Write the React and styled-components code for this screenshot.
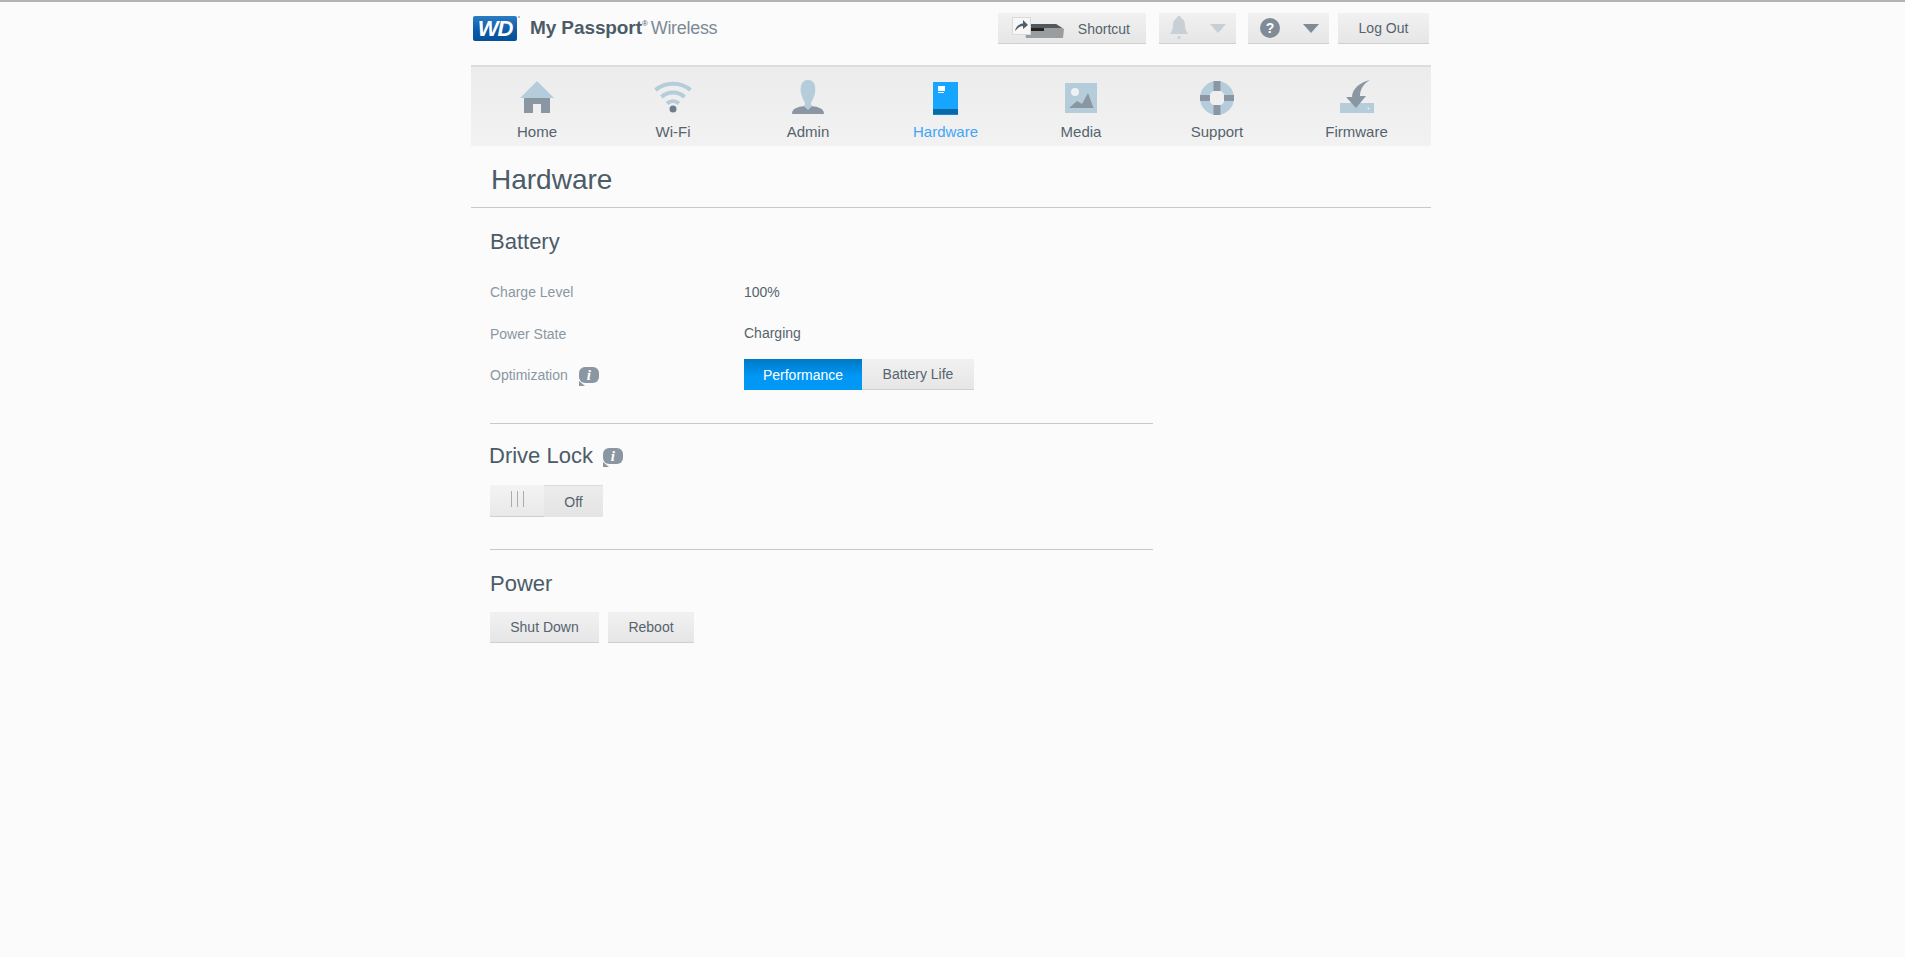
import React from "react";
import styled, { createGlobalStyle } from "styled-components";

const Global = createGlobalStyle`
  html, body { margin: 0; padding: 0; background: #fbfbfb; }
  body { font-family: "Liberation Sans", Arial, sans-serif; color: #4b5b68; border-top: 2px solid #b2b2b2; min-height: 955px; }
`;

const Page = styled.div`
  width: 960px;
  margin-left: 471px;
`;

const Header = styled.header`
  height: 63px;
  display: flex;
  justify-content: space-between;
  align-items: flex-start;
`;

const Brand = styled.div`
  display: flex;
  align-items: center;
  margin: 13px 0 0 2px;
`;

const WdBadge = styled.div`
  width: 44px;
  height: 25px;
  border-radius: 2px;
  background: linear-gradient(180deg, #2a7cc4 0%, #0b5aa6 60%, #054f96 100%);
  color: #fff;
  font: italic 700 22px/25px "Liberation Sans", sans-serif;
  letter-spacing: -1px;
  text-align: center;
  position: relative;
  &::after {
    content: "";
    position: absolute;
    right: -3px;
    top: 0;
    width: 2px;
    height: 2px;
    background: #8fb0cc;
    border-radius: 50%;
  }
`;

const BrandName = styled.div`
  margin: 0 0 0 13px;
  font-size: 19px;
  line-height: 25px;
  white-space: nowrap;
  color: #4b5b68;
  font-weight: 700;
  letter-spacing: -0.1px;
  sup { font-size: 8px; line-height: 0; vertical-align: 8px; font-weight: 400; }
`;

const BrandLight = styled.span`
  font-weight: 400;
  color: #7d8a95;
  margin-left: 3px;
  font-size: 18px;
  letter-spacing: -0.3px;
`;

const Actions = styled.div`
  display: flex;
  margin: 11px 2px 0 0;
`;

const TopButton = styled.div`
  box-sizing: border-box;
  width: ${(p) => p.$w}px;
  margin-left: ${(p) => p.$ml || 0}px;
  height: 31px;
  background: linear-gradient(180deg, #f1f1f1, #e6e6e6);
  border-bottom: 1px solid #cfcfcf;
  font-size: 14px;
  color: #55636e;
  display: flex;
  align-items: center;
  justify-content: ${(p) => p.$justify || "center"};
  padding: ${(p) => p.$pad || "0"};
`;

const ShortcutLabel = styled.span`
  margin-top: 2px;
`;

const Nav = styled.nav`
  box-sizing: border-box;
  height: 81px;
  border-top: 2px solid #dcdcdc;
  background: linear-gradient(180deg, #ececec, #f2f2f2);
  display: grid;
  grid-template-columns: 132px 140px 130px 145px 126px 146px 133px;
`;

const NavItem = styled.div`
  display: flex;
  flex-direction: column;
  align-items: center;
  font-size: 15px;
  line-height: 16px;
  color: ${(p) => (p.$active ? "#42a5f5" : "#55636e")};
  svg { display: block; height: 36px; margin: 13px 0 8px; }
`;

const TitleBar = styled.div`
  height: 62px;
  box-sizing: border-box;
  border-bottom: 1px solid #c9c9c9;
  padding: 17px 0 0 20px;
  font-size: 28px;
  line-height: 34px;
  color: #4b5b68;
`;

const Section = styled.section`
  width: 663px;
  margin-left: 19px;
  padding-bottom: ${(p) => p.$pb || 0}px;
  border-bottom: ${(p) => (p.$rule ? "1px solid #c9c9c9" : "none")};
`;

const Heading = styled.h2`
  margin: 0;
  padding-top: ${(p) => p.$pt}px;
  padding-bottom: ${(p) => p.$pb}px;
  margin-left: ${(p) => p.$ml || 0}px;
  font-size: 22px;
  line-height: 24px;
  font-weight: 400;
  color: #4b5b68;
  display: flex;
  align-items: center;
`;

const Row = styled.div`
  display: flex;
  align-items: center;
  height: ${(p) => p.$h}px;
  font-size: 14px;
`;

const Label = styled.div`
  width: 254px;
  color: #8a97a2;
  display: flex;
  align-items: center;
  margin-top: 1px;
`;

const Value = styled.div`
  color: #55636e;
`;

const Segment = styled.div`
  display: flex;
  height: 31px;
`;

const SegButton = styled.div`
  box-sizing: border-box;
  width: ${(p) => p.$w}px;
  height: 31px;
  display: flex;
  align-items: center;
  justify-content: center;
  font-size: 14px;
  color: ${(p) => (p.$on ? "#fff" : "#55636e")};
  background: ${(p) =>
    p.$on
      ? "linear-gradient(180deg, #0078c4, #0097f5 55%)"
      : "linear-gradient(180deg, #f1f1f1, #e6e6e6)"};
  border-bottom: ${(p) => (p.$on ? "none" : "1px solid #cfcfcf")};
`;

const InfoBubble = styled.span`
  position: relative;
  display: inline-flex;
  align-items: center;
  justify-content: center;
  width: 20px;
  height: 16px;
  margin-left: ${(p) => p.$ml}px;
  margin-top: -1px;
  border-radius: 6px;
  background: #8a97a2;
  color: #fff;
  font: italic 700 15px/16px "Liberation Serif", serif;
  &::after {
    content: "";
    position: absolute;
    left: 0;
    bottom: -3px;
    border-style: solid;
    border-width: 5px 0 0 6px;
    border-color: transparent transparent transparent #8a97a2;
  }
`;

const DriveToggle = styled.div`
  display: flex;
  height: 32px;
  padding-bottom: 32px;
`;

const Handle = styled.div`
  box-sizing: border-box;
  width: 54px;
  height: 32px;
  background: linear-gradient(180deg, #f3f3f3, #e9e9e9);
  border-bottom: 1px solid #cfcfcf;
  display: flex;
  justify-content: center;
  gap: 5px;
  padding-top: 6px;
`;

const Grip = styled.i`
  display: block;
  width: 1px;
  height: 16px;
  background: #a6adb3;
`;

const OffPart = styled.div`
  box-sizing: border-box;
  width: 59px;
  height: 32px;
  border-top: 1px solid #dcdcdc;
  background: linear-gradient(180deg, #ececec, #e4e4e4);
  display: flex;
  align-items: center;
  justify-content: center;
  font-size: 14px;
  color: #55636e;
`;

const ButtonRow = styled.div`
  display: flex;
  gap: 9px;
`;

const LIGHT = "#b5ccdb";
const DARK = "#8a97a2";

const HomeIcon = () => (
  <svg width="36" height="36" viewBox="0 0 36 36">
    <path d="M18 1 L35 18 H1 Z" fill={LIGHT} />
    <path d="M5 18 H31 V33 H22 V24 H14 V33 H5 Z" fill={DARK} />
  </svg>
);
const WifiIcon = () => (
  <svg width="40" height="36" viewBox="0 0 40 36" fill="none">
    <path d="M2.5 10 C12 1.5 28 1.5 37.5 10" stroke={LIGHT} strokeWidth="4" />
    <path d="M8.5 17 C15 11 25 11 31.500 17" stroke={LIGHT} strokeWidth="4" />
    <path d="M14 23.500 C17.500 20.500 22.500 20.500 26 23.500" stroke={LIGHT} strokeWidth="4" />
    <circle cx="20" cy="29" r="3.500" fill="#6f7d89" />
  </svg>
);
const AdminIcon = () => (
  <svg width="36" height="36" viewBox="0 0 36 36">
    <path d="M2 34 C2 28 8 27 14 26 L18 29 L22 26 C28 27 34 28 34 34 Z" fill={DARK} />
    <path d="M18 0 C25 0 26 7 25 13 C24 19 21 21 21 24 L22 26 L18 30 L14 26 L15 24 C15 21 12 19 11 13 C10 7 11 0 18 0 Z" fill={LIGHT} />
  </svg>
);
const HardwareIcon = () => (
  <svg width="26" height="36" viewBox="0 0 26 36">
    <rect x="0" y="2" width="25" height="33" fill="#16a6ff" />
    <rect x="0" y="29" width="25" height="5.500" fill="#0a69a8" />
    <rect x="5" y="6" width="7" height="5" fill="#fff" />
    <rect x="5" y="12" width="6" height="1" fill="#fff" />
  </svg>
);
const MediaIcon = () => (
  <svg width="32" height="36" viewBox="0 0 32 36">
    <rect x="0" y="3" width="32" height="30" fill={LIGHT} />
    <circle cx="10" cy="12" r="4" fill="#eef2f4" />
    <path d="M4 28 L12 21 L17 24 L23 13 L28.500 28 Z" fill={DARK} />
  </svg>
);
const SupportIcon = () => (
  <svg width="36" height="36" viewBox="0 0 36 36" fill="none">
    <circle cx="18" cy="18" r="12.500" stroke={LIGHT} strokeWidth="9" />
    <rect x="14.500" y="1" width="7" height="10" fill={DARK} />
    <rect x="14.500" y="25" width="7" height="10" fill={DARK} />
    <rect x="1" y="15" width="10" height="6" fill={DARK} />
    <rect x="25" y="15" width="10" height="6" fill={DARK} />
  </svg>
);
const FirmwareIcon = () => (
  <svg width="36" height="36" viewBox="0 0 36 36">
    <rect x="1" y="23" width="34" height="10" fill={LIGHT} />
    <circle cx="29.500" cy="28.500" r="1" fill="#eef2f4" />
    <path d="M31 0 C24 4 21 10 21 16 H27 L17 28 L7 17 H13 C13 9 21 2 31 0 Z" fill={DARK} />
  </svg>
);

const ShortcutIcon = () => (
  <svg width="54" height="22" viewBox="0 0 54 22">
    <path d="M12 7 H44 L52 12 L51 21 H14 Z" fill="#9a9d9f" />
    <path d="M12 7 H44 L50 11 H12 Z" fill="#55585a" />
    <rect x="14" y="11" width="18" height="3" fill="#222" />
    <rect x="0.500" y="0.500" width="18" height="17" fill="#f7f7f7" stroke="#dadada" />
    <path d="M3 14 C4 9 8 6.500 11 6.500 V3 L16 8 L11 12 V9 C8 9 6 11 3 14 Z" fill="#4f5f6c" />
  </svg>
);
const BellIcon = () => (
  <svg width="20" height="24" viewBox="0 0 20 24">
    <path d="M10 0 C12 0 12.500 1.500 12.500 2.500 C15 3.500 16 6 16 9 C16 13 17 15 19 18 H1 C3 15 4 13 4 9 C4 6 5 3.500 7.500 2.500 C7.500 1.500 8 0 10 0 Z" fill="#c8d0d5" />
    <circle cx="10" cy="21.500" r="1.500" fill="#c8d0d5" />
  </svg>
);
const Caret = ({ color }) => (
  <svg width="16" height="9" viewBox="0 0 16 9">
    <path d="M0 0 H16 L8 9 Z" fill={color} />
  </svg>
);
const HelpDisc = styled.span`
  width: 20px;
  height: 20px;
  border-radius: 50%;
  background: #7f8c97;
  color: #fff;
  font: 700 14px/20px "Liberation Sans", sans-serif;
  text-align: center;
`;

export default function App() {
  return (
    <>
      <Global />
      <Page>
        <Header>
          <Brand>
            <WdBadge>WD</WdBadge>
            <BrandName>
              My Passport<sup>®</sup>
              <BrandLight>Wireless</BrandLight>
            </BrandName>
          </Brand>
          <Actions>
            <TopButton $w={148} $justify="space-between" $pad="0 16px 0 14px">
              <ShortcutIcon />
              <ShortcutLabel>Shortcut</ShortcutLabel>
            </TopButton>
            <TopButton $w={77} $ml={13} $justify="space-between" $pad="0 10px 0 10px">
              <BellIcon />
              <Caret color="#c7cfd4" />
            </TopButton>
            <TopButton $w={81} $ml={12} $justify="space-between" $pad="0 10px 0 12px">
              <HelpDisc>?</HelpDisc>
              <Caret color="#7f8c97" />
            </TopButton>
            <TopButton $w={91} $ml={9}>Log Out</TopButton>
          </Actions>
        </Header>
        <Nav>
          <NavItem><HomeIcon />Home</NavItem>
          <NavItem><WifiIcon />Wi-Fi</NavItem>
          <NavItem><AdminIcon />Admin</NavItem>
          <NavItem $active><HardwareIcon />Hardware</NavItem>
          <NavItem><MediaIcon />Media</NavItem>
          <NavItem><SupportIcon />Support</NavItem>
          <NavItem><FirmwareIcon />Firmware</NavItem>
        </Nav>
        <TitleBar>Hardware</TitleBar>
        <Section $rule $pb={28}>
          <Heading $pt={22} $pb={17}>Battery</Heading>
          <Row $h={41}>
            <Label>Charge Level</Label>
            <Value>100%</Value>
          </Row>
          <Row $h={42}>
            <Label>Power State</Label>
            <Value>Charging</Value>
          </Row>
          <Row $h={41}>
            <Label>
              Optimization
              <InfoBubble $ml={11}>i</InfoBubble>
            </Label>
            <Segment>
              <SegButton $w={118} $on>Performance</SegButton>
              <SegButton $w={112}>Battery Life</SegButton>
            </Segment>
          </Row>
        </Section>
        <Section $rule>
          <Heading $pt={20} $pb={17} $ml={-1}>
            Drive Lock
            <InfoBubble $ml={10}>i</InfoBubble>
          </Heading>
          <DriveToggle>
            <Handle><Grip /><Grip /><Grip /></Handle>
            <OffPart>Off</OffPart>
          </DriveToggle>
        </Section>
        <Section>
          <Heading $pt={22} $pb={16}>Power</Heading>
          <ButtonRow>
            <TopButton $w={109}>Shut Down</TopButton>
            <TopButton $w={86}>Reboot</TopButton>
          </ButtonRow>
        </Section>
      </Page>
    </>
  );
}
